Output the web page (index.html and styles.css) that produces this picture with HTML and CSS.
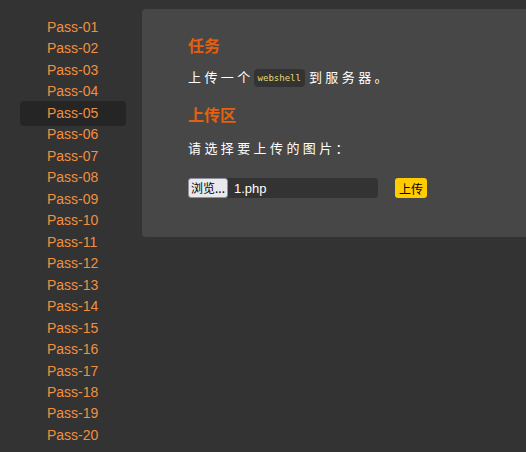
FILE: index.html
```html
<!DOCTYPE html>
<html lang="zh-CN">
<head>
    <meta charset="UTF-8">
    <title>upload-labs</title>
    <link rel="stylesheet" href="styles.css">
</head>
<body>
    <div class="menu">
        <ul>
            <li><a href="#">Pass-01</a></li>
            <li><a href="#">Pass-02</a></li>
            <li><a href="#">Pass-03</a></li>
            <li><a href="#">Pass-04</a></li>
            <li class="active"><a href="#">Pass-05</a></li>
            <li><a href="#">Pass-06</a></li>
            <li><a href="#">Pass-07</a></li>
            <li><a href="#">Pass-08</a></li>
            <li><a href="#">Pass-09</a></li>
            <li><a href="#">Pass-10</a></li>
            <li><a href="#">Pass-11</a></li>
            <li><a href="#">Pass-12</a></li>
            <li><a href="#">Pass-13</a></li>
            <li><a href="#">Pass-14</a></li>
            <li><a href="#">Pass-15</a></li>
            <li><a href="#">Pass-16</a></li>
            <li><a href="#">Pass-17</a></li>
            <li><a href="#">Pass-18</a></li>
            <li><a href="#">Pass-19</a></li>
            <li><a href="#">Pass-20</a></li>
        </ul>
    </div>
    <div class="content">
        <h3>任务</h3>
        <p>上传一个<code>webshell</code>到服务器。</p>
        <h3 class="second">上传区</h3>
        <p>请选择要上传的图片：</p>
        <form class="upload-form" onsubmit="return false">
            <div class="file-input">
                <span class="browse">浏览...</span>
                <span class="file-name">1.php</span>
            </div>
            <button class="upload-btn" type="submit">上传</button>
        </form>
    </div>
</body>
</html>
```

FILE: styles.css
```css
html, body {
    height: 100%;
}

body {
    margin: 0;
    display: flex;
    align-items: flex-start;
    overflow: hidden;
    background-color: #333333;
    font-family: "Liberation Sans", "Noto Sans CJK SC", sans-serif;
}

.menu {
    flex: 0 0 142px;
    padding-top: 17px;
}

.menu ul {
    list-style: none;
    margin: 0;
    padding: 0 16px 0 20px;
}

.menu li {
    line-height: 21.47px;
    font-size: 14px;
    padding-left: 27px;
}

.menu li.active {
    background-color: #252525;
    border-radius: 4px;
    padding-top: 2px;
    padding-bottom: 2px;
    margin: -2px 0;
}

.menu a {
    color: #f0903f;
    text-decoration: none;
}

.content {
    flex: 1;
    margin-top: 9px;
    padding: 26px 0 39px 46px;
    background-color: #474747;
    border-radius: 4px 0 0 4px;
    font-family: "Noto Sans CJK SC", "Liberation Sans", sans-serif;
}

.content h3 {
    margin: 0 0 12px;
    font-size: 16px;
    line-height: 20px;
    font-weight: bold;
    color: #e2600f;
}

.content h3.second {
    margin-top: 17px;
    margin-bottom: 14px;
}

.content p {
    margin: 0;
    font-size: 13px;
    line-height: 20px;
    letter-spacing: 3.4px;
    color: #ffffff;
}

.content code {
    display: inline-block;
    margin: 0 4px 0 0;
    padding: 0 4px;
    line-height: 18px;
    vertical-align: middle;
    background-color: #333333;
    border-radius: 4px;
    font-family: "DejaVu Sans Mono", "Liberation Mono", monospace;
    font-size: 9px;
    letter-spacing: 0;
    color: #e6db74;
}

.upload-form {
    display: flex;
    align-items: center;
    margin-top: 20px;
}

.file-input {
    display: flex;
    align-items: center;
    width: 190px;
    height: 20px;
    background-color: #333333;
    border-radius: 4px;
}

.browse {
    box-sizing: border-box;
    height: 20px;
    padding: 0 2px;
    line-height: 18px;
    background-color: #e9e9ed;
    border: 1px solid #8f8f9d;
    border-radius: 3px;
    font-size: 12px;
    color: #000000;
}

.file-name {
    padding-left: 6px;
    font-family: "Liberation Sans", sans-serif;
    font-size: 13px;
    color: #ffffff;
}

.upload-btn {
    margin-left: 17px;
    height: 20px;
    padding: 0 4px;
    border: none;
    border-radius: 3px;
    background-color: #ffcc00;
    font-family: "Noto Sans CJK SC", sans-serif;
    font-size: 12px;
    color: #000000;
    cursor: pointer;
}
```
